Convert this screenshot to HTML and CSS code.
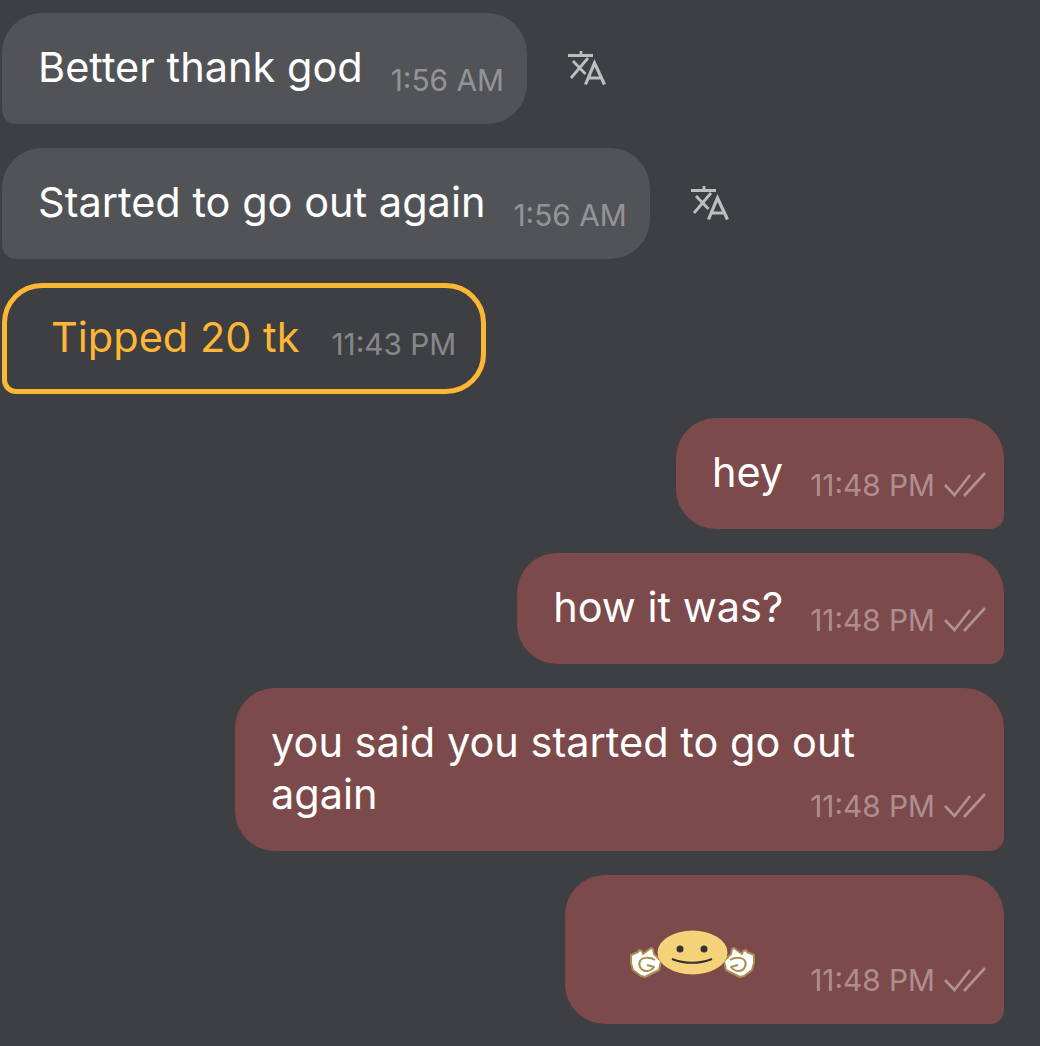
FILE: index.html
```html
<!DOCTYPE html>
<html lang="en">
<head>
    <meta charset="UTF-8">
    <meta name="viewport" content="width=device-width, initial-scale=1.0">
    <title>Chat</title>
    <link rel="stylesheet" href="styles.css">
</head>
<body>
    <svg class="sprites" width="0" height="0" aria-hidden="true">
        <symbol id="translate" viewBox="0 0 38 36">
            <path d="M0 4.500h25M13 0v4.500M5 10l12.500 13M20 7 3 27" fill="none" stroke="currentColor" stroke-width="2.800"/>
            <path d="M17.500 33.500 26.500 12l10 21.500M21 27h12.500" fill="none" stroke="currentColor" stroke-width="3.200"/>
        </symbol>
        <symbol id="ticks" viewBox="0 0 42 26">
            <path d="M1 13l9.500 10L26 3M20 24 41 1" fill="none" stroke="currentColor" stroke-width="2.600"/>
        </symbol>
    </svg>

    <main class="chat">
        <!-- Incoming -->
        <div class="row">
            <div class="bubble in">
                <span class="text">Better thank god</span>
                <span class="meta">1:56 AM</span>
            </div>
            <svg class="translate"><use href="#translate"/></svg>
        </div>
        <div class="row">
            <div class="bubble in">
                <span class="text">Started to go out again</span>
                <span class="meta">1:56 AM</span>
            </div>
            <svg class="translate"><use href="#translate"/></svg>
        </div>
        <div class="row">
            <div class="bubble tip">
                <span class="text">Tipped 20 tk</span>
                <span class="meta">11:43 PM</span>
            </div>
        </div>

        <!-- Outgoing -->
        <div class="row right">
            <div class="bubble out">
                <span class="text">hey</span>
                <span class="meta">11:48 PM <svg class="ticks"><use href="#ticks"/></svg></span>
            </div>
        </div>
        <div class="row right">
            <div class="bubble out">
                <span class="text">how it was?</span>
                <span class="meta">11:48 PM <svg class="ticks"><use href="#ticks"/></svg></span>
            </div>
        </div>
        <div class="row right">
            <div class="bubble out long">
                <span class="text">you said you started to go out again</span>
                <span class="meta">11:48 PM <svg class="ticks"><use href="#ticks"/></svg></span>
            </div>
        </div>
        <div class="row right">
            <div class="bubble out sticker">
                <svg class="smiley" viewBox="0 0 125 50">
                    <g id="hand" fill="none" stroke="#a89050" stroke-width="2" stroke-linejoin="round">
                        <path fill="#fff" d="M1 26l7-3 1-2 3 1 1 3 8-6 2 1 1 5 7 7-2 9-14 7-4-1-8-6-2-7z"/>
                        <path d="M25 31c-5-3-13-3-15 1s1 10 6 10 8-4 8-4l-7-2"/>
                    </g>
                    <use href="#hand" transform="matrix(-1 0 0 1 125 0)"/>
                    <ellipse cx="62.500" cy="23.500" rx="35" ry="22" fill="#f6d27a"/>
                    <circle cx="50" cy="20" r="3.500" fill="#333"/>
                    <circle cx="74" cy="20" r="3.500" fill="#333"/>
                    <path d="M42 30c13 5 27 5 40 0" fill="none" stroke="#333" stroke-width="2"/>
                </svg>
                <span class="meta">11:48 PM <svg class="ticks"><use href="#ticks"/></svg></span>
            </div>
        </div>
    </main>
</body>
</html>
```

FILE: styles.css
```css
/* General page styles */
body {
    margin: 0;
    background-color: #3e3f43;
    font-family: Inter, "Liberation Sans", sans-serif;
    overflow: hidden;
}

.sprites {
    position: absolute;
}

.chat {
    display: flex;
    flex-direction: column;
    gap: 24px;
    padding: 13px 36px 0 2px;
}

.row {
    display: flex;
    align-items: center;
    gap: 41px;
}

.row.right {
    justify-content: flex-end;
}

/* Bubbles */
.bubble {
    position: relative;
    box-sizing: border-box;
    display: flex;
    align-items: center;
    min-height: 111px;
    padding: 0 23px 0 36px;
    border-radius: 40px 40px 40px 14px;
    font-size: 41.500px;
    line-height: 52px;
    color: #fff;
}

.bubble .text {
    margin-top: -4px;
}

.bubble.in {
    background-color: #525357;
}

.bubble.tip {
    padding: 0 25px 0 44px;
    border: 5px solid #fdb735;
    color: #fdb735;
}

.bubble.tip .meta {
    margin: 10px 0 0 32px;
}

.bubble.out {
    padding-right: 18px;
    background-color: #7c4a4b;
    border-radius: 40px 40px 14px 40px;
}

.bubble.out .meta {
    margin-left: 27px;
}

.bubble.long {
    display: block;
    width: 769px;
    min-height: 163px;
    padding: 28px 100px 29px 36px;
}

.bubble.long .text {
    margin: 0;
}

.bubble.long .meta {
    position: absolute;
    right: 18px;
    bottom: 25px;
    margin: 0;
}

.bubble.sticker {
    width: 439px;
    min-height: 149px;
    padding-left: 65px;
    justify-content: space-between;
}

.bubble.sticker .meta {
    margin-top: 60px;
}

.meta {
    display: flex;
    align-items: center;
    gap: 9px;
    margin: 22px 0 0 28px;
    font-size: 29.800px;
    line-height: 40px;
    white-space: nowrap;
    color: rgba(255, 255, 255, 0.4);
}

/* Icons */
.translate {
    width: 38px;
    height: 36px;
    color: #bdbec0;
}

.ticks {
    width: 42px;
    height: 26px;
    color: rgba(255, 255, 255, 0.4);
}

.smiley {
    width: 125px;
    height: 50px;
    flex: none;
    margin-top: 9px;
}
```
